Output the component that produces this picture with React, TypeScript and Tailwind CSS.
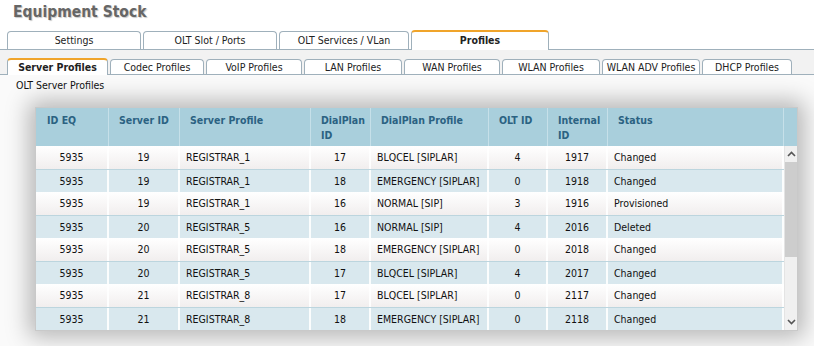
import React from "react";

const topTabs = [
  { label: "Settings", w: "w-[134px]" },
  { label: "OLT Slot / Ports", w: "w-[134px]" },
  { label: "OLT Services / VLan", w: "w-[130px]" },
  { label: "Profiles", w: "w-[138px]", active: true },
];

const subTabs = [
  { label: "Server Profiles", w: "w-[101px]", active: true },
  { label: "Codec Profiles", w: "w-[94px]" },
  { label: "VoIP Profiles", w: "w-[96px]" },
  { label: "LAN Profiles", w: "w-[98px]" },
  { label: "WAN Profiles", w: "w-[96px]" },
  { label: "WLAN Profiles", w: "w-[98px]" },
  { label: "WLAN ADV Profiles", w: "w-[98px]" },
  { label: "DHCP Profiles", w: "w-[90px]" },
];

const columns = [
  { title: "ID EQ", w: "w-[73px]" },
  { title: "Server ID", w: "w-[71px]" },
  { title: "Server Profile", w: "w-[131px]" },
  { title: "DialPlan ID", w: "w-[60px]" },
  { title: "DialPlan Profile", w: "w-[118px]" },
  { title: "OLT ID", w: "w-[59px]" },
  { title: "Internal ID", w: "w-[60px]" },
  { title: "Status", w: "w-[176px]" },
];

const rows = [
  ["5935", "19", "REGISTRAR_1", "17", "BLQCEL [SIPLAR]", "4", "1917", "Changed"],
  ["5935", "19", "REGISTRAR_1", "18", "EMERGENCY [SIPLAR]", "0", "1918", "Changed"],
  ["5935", "19", "REGISTRAR_1", "16", "NORMAL [SIP]", "3", "1916", "Provisioned"],
  ["5935", "20", "REGISTRAR_5", "16", "NORMAL [SIP]", "4", "2016", "Deleted"],
  ["5935", "20", "REGISTRAR_5", "18", "EMERGENCY [SIPLAR]", "0", "2018", "Changed"],
  ["5935", "20", "REGISTRAR_5", "17", "BLQCEL [SIPLAR]", "4", "2017", "Changed"],
  ["5935", "21", "REGISTRAR_8", "17", "BLQCEL [SIPLAR]", "0", "2117", "Changed"],
  ["5935", "21", "REGISTRAR_8", "18", "EMERGENCY [SIPLAR]", "0", "2118", "Changed"],
];

// text columns are left aligned, the rest centered
const leftCols = [2, 4, 7];

function Tab({ label, w, active, h }: { label: string; w: string; active?: boolean; h: string }) {
  return (
    <div
      className={`${w} ${
        active
          ? `${h} border-t-2 border-t-[#f0a42a] font-bold -mb-px pb-px`
          : `${h === "h-[20px]" ? "h-[18px]" : "h-[15px]"} border-t border-t-[#9fb0bb] mt-auto`
      } flex items-center justify-center rounded-t-[4px] border-x border-x-[#9fb0bb] bg-white text-[#222] shrink-0`}
    >
      {label}
    </div>
  );
}

export default function App() {
  return (
    <div
      className="w-[814px] h-[346px] bg-[#fafafa] overflow-hidden text-[10.5px] leading-none"
      style={{ fontFamily: '"DejaVu Sans Condensed", "DejaVu Sans", sans-serif' }}
    >
      <div className="h-[30px] pl-[13px] pt-[5px] text-[15.5px] font-bold text-[#666] [text-shadow:1px_1px_1px_#c8c8c8] bg-white">
        Equipment Stock
      </div>

      <div className="flex gap-[2px] pl-[7px] border-b border-[#9fb0bb] h-[20px] items-end bg-white">
        {topTabs.map((t) => (
          <Tab key={t.label} {...t} h="h-[20px]" />
        ))}
      </div>

      <div className="h-[8px] bg-[#f2f2f2]" />

      <div className="flex gap-[2px] pl-[7px] border-b border-[#9fb0bb] h-[17px] items-end bg-[#f2f2f2]">
        {subTabs.map((t) => (
          <Tab key={t.label} {...t} h="h-[17px]" />
        ))}
      </div>

      <div className="pl-[16px] pt-[5px] h-[32px] text-[#111]">OLT Server Profiles</div>

      <div className="ml-[35px] w-[763px] border border-[#c9c9c9] shadow-[0_0_22px_6px_rgba(0,0,0,0.28)] bg-white">
        <div className="flex h-[38px] bg-[#a9cfdc] text-[#2b6282] font-bold">
          {columns.map((c, i) => (
            <div
              key={c.title}
              className={`${c.w} shrink-0 border-r border-[#c6e0e9] pt-[5px] leading-[15px] ${
                i === 0 ? "pl-[11px]" : "pl-[10px]"
              } pr-[4px]`}
            >
              {c.title}
            </div>
          ))}
          <div className="flex-1" />
        </div>

        <div className="flex">
          <div className="flex flex-col">
            {rows.map((r, ri) => (
              <div
                key={ri}
                className={`flex h-[23px] ${
                  ri % 2 === 0
                    ? "bg-gradient-to-b from-white to-[#f1eeee]"
                    : "bg-[#d9e8ee] border-t border-[#bcd5de]"
                }`}
              >
                {r.map((v, ci) => (
                  <div
                    key={ci}
                    className={`${columns[ci].w} shrink-0 border-r-2 border-white/90 flex items-center text-[#111] ${
                      leftCols.includes(ci) ? "pl-[6px]" : "justify-center"
                    }`}
                  >
                    {v}
                  </div>
                ))}
              </div>
            ))}
          </div>

          <div className="w-[14px] flex flex-col bg-[#f0f0f0] border-l border-[#e4e4e4]">
            <div className="h-[16px] flex items-center justify-center">
              <svg width="9" height="6" viewBox="0 0 9 6">
                <path d="M1 5 L4.5 1.5 L8 5" fill="none" stroke="#555" strokeWidth="1.6" />
              </svg>
            </div>
            <div className="h-[95px] bg-[#cdcdcd]" />
            <div className="flex-1" />
            <div className="h-[16px] flex items-center justify-center">
              <svg width="9" height="6" viewBox="0 0 9 6">
                <path d="M1 1 L4.5 4.5 L8 1" fill="none" stroke="#555" strokeWidth="1.6" />
              </svg>
            </div>
          </div>
        </div>
      </div>
    </div>
  );
}
